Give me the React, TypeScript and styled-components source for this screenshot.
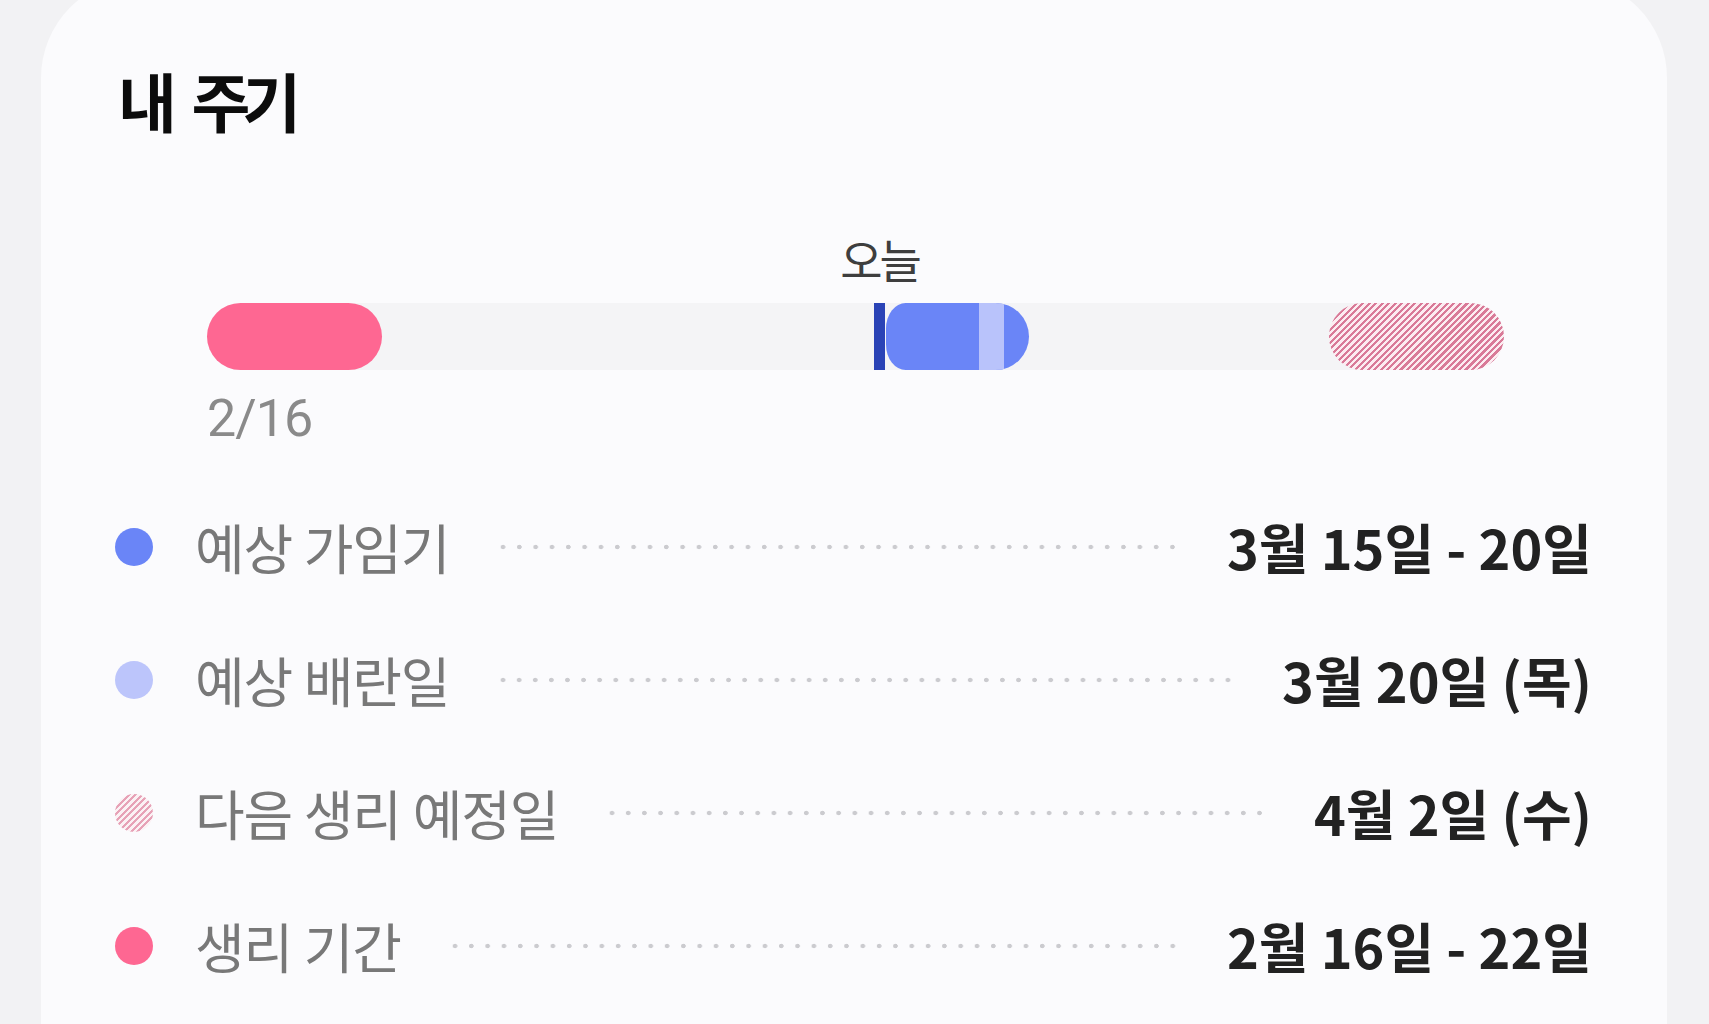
import React from "react";
import styled, { createGlobalStyle, css } from "styled-components";

const GlobalStyle = createGlobalStyle`
  html, body {
    margin: 0;
    padding: 0;
    background: #f2f2f4;
    overflow: hidden;
  }
  body {
    font-family: "Noto Sans CJK KR", "Noto Sans", sans-serif;
    -webkit-font-smoothing: antialiased;
  }
`;

const Page = styled.div`
  width: 1709px;
  height: 1024px;
  box-sizing: border-box;
  padding: 0 42px 0 41px;
  overflow: hidden;
`;

const Card = styled.section`
  margin-top: -22px;
  background: #fbfbfd;
  border-radius: 100px;
  padding: 89px 75px 120px 74px;
  display: flex;
  flex-direction: column;
`;

const Title = styled.h2`
  margin: 0 0 0 3px;
  font-size: 64px;
  line-height: 1;
  font-weight: 700;
  color: #0c0c0c;
  letter-spacing: -8px;
  word-spacing: 16px;
`;

const Timeline = styled.div`
  margin: 172px 88px 0 92px;
  display: flex;
  flex-direction: column;
`;

const Track = styled.div`
  position: relative;
  height: 67px;
  background: #f4f4f6;
  border-radius: 34px;
`;

const Segment = styled.div<{ $kind: "period" | "fertile" | "next" }>`
  position: absolute;
  top: 0;
  bottom: 0;
  overflow: hidden;
  ${({ $kind }) =>
    $kind === "period"
      ? css`
          background: #fe6792;
          border-radius: 34px;
        `
      : $kind === "fertile"
      ? css`
          background: #6a85f7;
          border-radius: 20px 34px 34px 20px / 26px 34px 34px 26px;
        `
      : css`
          background: repeating-linear-gradient(
            135deg,
            #d97a98 0 2.4px,
            #fcecf1 2.4px 4.6px
          );
          border-radius: 34px;
        `}
`;

const Ovulation = styled.div`
  position: absolute;
  top: 0;
  bottom: 0;
  background: #b9c3fb;
`;

const TodayMarker = styled.div`
  position: absolute;
  top: 0;
  bottom: 0;
  width: 11px;
  background: #2a43b6;
`;

const TodayLabel = styled.span`
  position: absolute;
  left: 50%;
  bottom: calc(100% + 22px);
  transform: translateX(-50%);
  font-size: 46px;
  line-height: 1;
  font-weight: 400;
  color: #3e3e3e;
  letter-spacing: -3px;
  white-space: nowrap;
`;

const StartDate = styled.div`
  margin-top: 23px;
  font-family: Roboto, "Noto Sans", sans-serif;
  font-size: 52px;
  line-height: 1;
  color: #8a8a8a;
  letter-spacing: -1px;
`;

const Legend = styled.div`
  margin-top: 35px;
  display: flex;
  flex-direction: column;
`;

const Row = styled.div`
  height: 133px;
  display: flex;
  align-items: center;
`;

const Dot = styled.span<{ $kind: "fertile" | "ovulation" | "next" | "period" }>`
  flex: none;
  width: 38px;
  height: 38px;
  border-radius: 50%;
  ${({ $kind }) =>
    $kind === "fertile"
      ? css`
          background: #6a85f7;
        `
      : $kind === "ovulation"
      ? css`
          background: #bcc5fb;
        `
      : $kind === "period"
      ? css`
          background: #fe6792;
        `
      : css`
          background: repeating-linear-gradient(
            135deg,
            #e7a2b7 0 2.2px,
            #fbf1f4 2.2px 4.6px
          );
        `}
`;

const Label = styled.span`
  margin-left: 42px;
  font-size: 54px;
  line-height: 1;
  color: #787878;
  letter-spacing: -1.2px;
  word-spacing: 1px;
  white-space: nowrap;
`;

const Leader = styled.span`
  flex: 1;
  height: 6px;
  margin: 0 46px;
  background-image: radial-gradient(circle, #cbcbcf 2px, transparent 2.6px);
  background-size: 16px 6px;
  background-repeat: space no-repeat;
  background-position: left center;
`;

const Value = styled.span`
  font-size: 54px;
  line-height: 1;
  font-weight: 600;
  color: #222222;
  letter-spacing: 0;
  white-space: nowrap;
`;

type Kind = "fertile" | "ovulation" | "next" | "period";

const rows: { kind: Kind; label: string; value: string }[] = [
  { kind: "fertile", label: "예상 가임기", value: "3월 15일 - 20일" },
  { kind: "ovulation", label: "예상 배란일", value: "3월 20일 (목)" },
  { kind: "next", label: "다음 생리 예정일", value: "4월 2일 (수)" },
  { kind: "period", label: "생리 기간", value: "2월 16일 - 22일" },
];

// positions along the cycle track, as fractions of its length
const cycle = {
  period: { start: 0, length: 0.1351 },
  today: 0.5143,
  fertile: { start: 0.5236, length: 0.1104 },
  ovulation: { start: 0.65, length: 0.175 }, // relative to fertile window
  next: { start: 0.8649, length: 0.1351 },
};

const pct = (v: number) => `${(v * 100).toFixed(3)}%`;

export default function App() {
  return (
    <>
      <GlobalStyle />
      <Page>
        <Card>
          <Title>내 주기</Title>
          <Timeline>
            <Track>
              <Segment
                $kind="period"
                style={{ left: pct(cycle.period.start), width: pct(cycle.period.length) }}
              />
              <Segment
                $kind="fertile"
                style={{ left: pct(cycle.fertile.start), width: pct(cycle.fertile.length) }}
              >
                <Ovulation
                  style={{ left: pct(cycle.ovulation.start), width: pct(cycle.ovulation.length) }}
                />
              </Segment>
              <Segment
                $kind="next"
                style={{ left: pct(cycle.next.start), width: pct(cycle.next.length) }}
              />
              <TodayMarker style={{ left: pct(cycle.today) }}>
                <TodayLabel>오늘</TodayLabel>
              </TodayMarker>
            </Track>
            <StartDate>2/16</StartDate>
          </Timeline>
          <Legend>
            {rows.map((r) => (
              <Row key={r.label}>
                <Dot $kind={r.kind} />
                <Label>{r.label}</Label>
                <Leader />
                <Value>{r.value}</Value>
              </Row>
            ))}
          </Legend>
        </Card>
      </Page>
    </>
  );
}
